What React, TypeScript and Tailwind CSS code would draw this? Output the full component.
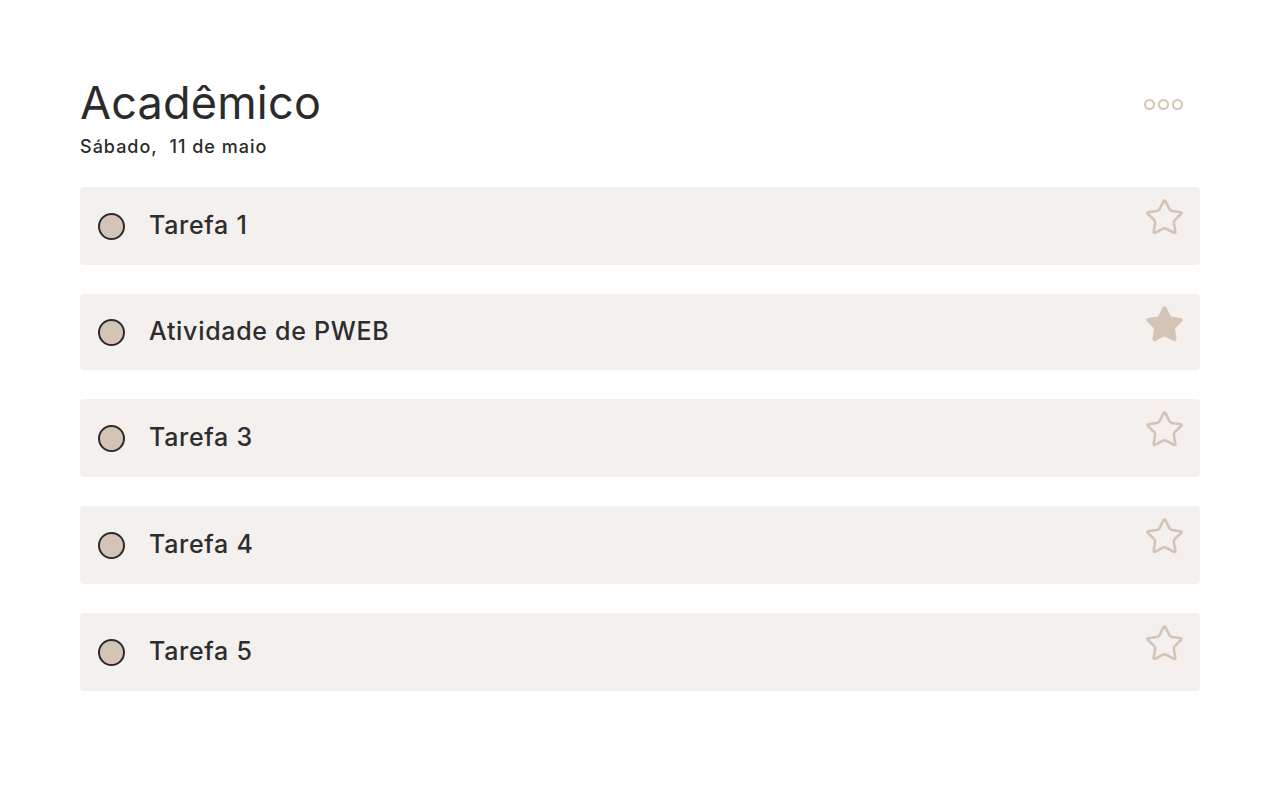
import { Star } from "lucide-react";

type Task = {
  id: number;
  title: string;
  starred: boolean;
};

const tasks: Task[] = [
  { id: 1, title: "Tarefa 1", starred: false },
  { id: 2, title: "Atividade de PWEB", starred: true },
  { id: 3, title: "Tarefa 3", starred: false },
  { id: 4, title: "Tarefa 4", starred: false },
  { id: 5, title: "Tarefa 5", starred: false },
];

export default function App() {
  return (
    <div
      className="min-h-screen bg-white text-[#2b2b2b]"
      style={{ fontFamily: "Inter, 'Noto Sans', sans-serif" }}
    >
      <div className="mx-20 pt-[76px]">
        {/* Header */}
        <div className="flex items-start justify-between">
          <div>
            <h1 className="text-[45px] leading-[54px] tracking-[0.2px] font-normal">
              Acadêmico
            </h1>
            <p className="mt-[6px] text-[18px] leading-[22px] font-medium tracking-[1px]">
              Sábado,&nbsp; 11 de maio
            </p>
          </div>
          <button className="mt-[23px] mr-[17px] flex gap-[3px]">
            <span className="w-[11px] h-[11px] rounded-full border-2 border-[#d4c4b5]" />
            <span className="w-[11px] h-[11px] rounded-full border-2 border-[#d4c4b5]" />
            <span className="w-[11px] h-[11px] rounded-full border-2 border-[#d4c4b5]" />
          </button>
        </div>

        {/* Task list */}
        <div className="mt-[29px] flex flex-col gap-[29px]">
          {tasks.map((task) => (
            <TaskRow key={task.id} task={task} />
          ))}
        </div>
      </div>
    </div>
  );
}

function TaskRow({ task }: { task: Task }) {
  return (
    <div
      className={
        "flex items-start justify-between rounded-[4px] bg-[#f3f0ed] pl-[18px] pr-[15px] " +
        (task.starred ? "h-[76px]" : "h-[78px]")
      }
    >
      <div className="flex items-center gap-[24px] self-center">
        <span className="w-[27px] h-[27px] rounded-full bg-[#d4c4b5] border-2 border-[#2b2b2b]" />
        <span className="-mt-[2px] text-[25px] leading-[30px] font-medium tracking-[0.7px] text-[#2d2d2d]">
          {task.title}
        </span>
      </div>
      {task.starred ? (
        <Star
          size={41}
          strokeWidth={1.4}
          className="mt-[10px] text-[#d4c4b5]"
          fill="#d4c4b5"
        />
      ) : (
        <Star size={41} strokeWidth={1.5} className="mt-[10px] text-[#d4c4b5]" />
      )}
    </div>
  );
}
